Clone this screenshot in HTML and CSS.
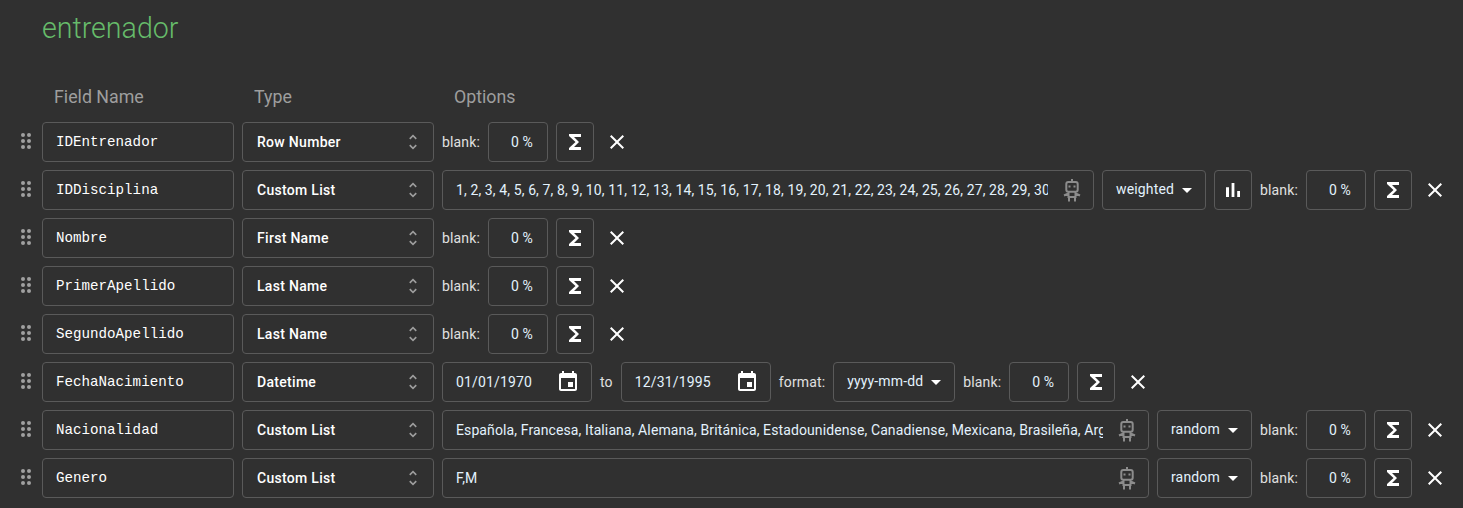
FILE: index.html
```html
<!DOCTYPE html>
<html lang="en">
<head>
  <meta charset="UTF-8">
  <meta name="viewport" content="width=device-width, initial-scale=1.0">
  <title>entrenador</title>
  <link rel="stylesheet" href="styles.css">
</head>
<body>
  <svg class="sprites" width="0" height="0">
    <symbol id="i-drag" viewBox="0 0 12 18"><circle cx="3" cy="3" r="2"/><circle cx="9" cy="3" r="2"/><circle cx="3" cy="9" r="2"/><circle cx="9" cy="9" r="2"/><circle cx="3" cy="15" r="2"/><circle cx="9" cy="15" r="2"/></symbol>
    <symbol id="i-unfold" viewBox="0 0 24 24"><path d="M12 5.83L15.17 9l1.41-1.41L12 3 7.41 7.59 8.83 9 12 5.83zm0 12.34L8.83 15l-1.41 1.41L12 21l4.59-4.59L15.17 15 12 18.17z"/></symbol>
    <symbol id="i-sum" viewBox="0 0 24 24"><path d="M18 4H6v2l6.5 6L6 18v2h12v-3h-7l5-5-5-5h7z"/></symbol>
    <symbol id="i-close" viewBox="0 0 24 24"><path d="M19 6.41L17.59 5 12 10.59 6.41 5 5 6.41 10.59 12 5 17.59 6.41 19 12 13.41 17.59 19 19 17.59 13.41 12z"/></symbol>
    <symbol id="i-bars" viewBox="0 0 24 24"><path d="M5 9.2h3V19H5zM10.6 5h2.8v14h-2.8zm5.6 8H19v6h-2.8z"/></symbol>
    <symbol id="i-event" viewBox="0 0 24 24"><path d="M17 12h-5v5h5v-5zM16 1v2H8V1H6v2H5c-1.11 0-1.99.9-1.99 2L3 19c0 1.1.89 2 2 2h14c1.1 0 2-.9 2-2V5c0-1.1-.9-2-2-2h-1V1h-2zm3 18H5V8h14v11z"/></symbol>
    <symbol id="i-robot" viewBox="0 0 24 24"><path d="M12 1v3M8.300 4h7.400a2 2 0 0 1 2 2v5.700a2 2 0 0 1-2 2H8.300a2 2 0 0 1-2-2V6a2 2 0 0 1 2-2zM9.500 7.500v2M14.500 7.500v2M8.500 13.700V19h7v-5.300M8.500 15.500L4 17.500M15.500 15.500l4.500 2M9 19v4.500M15 19v4.500"/></symbol>
  </svg>

  <h1 class="title">entrenador</h1>

  <div class="head-row">
    <span class="head-name">Field Name</span>
    <span class="head-type">Type</span>
    <span>Options</span>
  </div>

  <div class="row">
    <svg class="drag"><use href="#i-drag"/></svg>
    <input class="box name" value="IDEntrenador">
    <div class="box type">Row Number <svg class="unfold"><use href="#i-unfold"/></svg></div>
    <span class="lbl">blank:</span>
    <input class="box pct" value="0 %">
    <button class="btn"><svg class="ico"><use href="#i-sum"/></svg></button>
    <button class="del"><svg class="ico"><use href="#i-close"/></svg></button>
  </div>

  <div class="row">
    <svg class="drag"><use href="#i-drag"/></svg>
    <input class="box name" value="IDDisciplina">
    <div class="box type">Custom List <svg class="unfold"><use href="#i-unfold"/></svg></div>
    <div class="box list">
      <input value="1, 2, 3, 4, 5, 6, 7, 8, 9, 10, 11, 12, 13, 14, 15, 16, 17, 18, 19, 20, 21, 22, 23, 24, 25, 26, 27, 28, 29, 30, 31, 32, 33, 34, 35">
      <svg class="robot"><use href="#i-robot"/></svg>
    </div>
    <div class="box pick weighted">weighted <i class="caret"></i></div>
    <button class="btn"><svg class="ico"><use href="#i-bars"/></svg></button>
    <span class="lbl">blank:</span>
    <input class="box pct" value="0 %">
    <button class="btn"><svg class="ico"><use href="#i-sum"/></svg></button>
    <button class="del"><svg class="ico"><use href="#i-close"/></svg></button>
  </div>

  <div class="row">
    <svg class="drag"><use href="#i-drag"/></svg>
    <input class="box name" value="Nombre">
    <div class="box type">First Name <svg class="unfold"><use href="#i-unfold"/></svg></div>
    <span class="lbl">blank:</span>
    <input class="box pct" value="0 %">
    <button class="btn"><svg class="ico"><use href="#i-sum"/></svg></button>
    <button class="del"><svg class="ico"><use href="#i-close"/></svg></button>
  </div>

  <div class="row">
    <svg class="drag"><use href="#i-drag"/></svg>
    <input class="box name" value="PrimerApellido">
    <div class="box type">Last Name <svg class="unfold"><use href="#i-unfold"/></svg></div>
    <span class="lbl">blank:</span>
    <input class="box pct" value="0 %">
    <button class="btn"><svg class="ico"><use href="#i-sum"/></svg></button>
    <button class="del"><svg class="ico"><use href="#i-close"/></svg></button>
  </div>

  <div class="row">
    <svg class="drag"><use href="#i-drag"/></svg>
    <input class="box name" value="SegundoApellido">
    <div class="box type">Last Name <svg class="unfold"><use href="#i-unfold"/></svg></div>
    <span class="lbl">blank:</span>
    <input class="box pct" value="0 %">
    <button class="btn"><svg class="ico"><use href="#i-sum"/></svg></button>
    <button class="del"><svg class="ico"><use href="#i-close"/></svg></button>
  </div>

  <div class="row">
    <svg class="drag"><use href="#i-drag"/></svg>
    <input class="box name" value="FechaNacimiento">
    <div class="box type">Datetime <svg class="unfold"><use href="#i-unfold"/></svg></div>
    <div class="box date"><span>01/01/1970</span><svg class="ico"><use href="#i-event"/></svg></div>
    <span class="lbl">to</span>
    <div class="box date"><span>12/31/1995</span><svg class="ico"><use href="#i-event"/></svg></div>
    <span class="lbl">format:</span>
    <div class="box pick format">yyyy-mm-dd <i class="caret"></i></div>
    <span class="lbl">blank:</span>
    <input class="box pct" value="0 %">
    <button class="btn"><svg class="ico"><use href="#i-sum"/></svg></button>
    <button class="del"><svg class="ico"><use href="#i-close"/></svg></button>
  </div>

  <div class="row">
    <svg class="drag"><use href="#i-drag"/></svg>
    <input class="box name" value="Nacionalidad">
    <div class="box type">Custom List <svg class="unfold"><use href="#i-unfold"/></svg></div>
    <div class="box list">
      <input value="Española, Francesa, Italiana, Alemana, Británica, Estadounidense, Canadiense, Mexicana, Brasileña, Argentina, Japonesa">
      <svg class="robot"><use href="#i-robot"/></svg>
    </div>
    <div class="box pick random">random <i class="caret"></i></div>
    <span class="lbl">blank:</span>
    <input class="box pct" value="0 %">
    <button class="btn"><svg class="ico"><use href="#i-sum"/></svg></button>
    <button class="del"><svg class="ico"><use href="#i-close"/></svg></button>
  </div>

  <div class="row">
    <svg class="drag"><use href="#i-drag"/></svg>
    <input class="box name" value="Genero">
    <div class="box type">Custom List <svg class="unfold"><use href="#i-unfold"/></svg></div>
    <div class="box list">
      <input value="F,M">
      <svg class="robot"><use href="#i-robot"/></svg>
    </div>
    <div class="box pick random">random <i class="caret"></i></div>
    <span class="lbl">blank:</span>
    <input class="box pct" value="0 %">
    <button class="btn"><svg class="ico"><use href="#i-sum"/></svg></button>
    <button class="del"><svg class="ico"><use href="#i-close"/></svg></button>
  </div>
</body>
</html>
```

FILE: styles.css
```css
* {
  box-sizing: border-box;
}
body {
  margin: 0;
  padding: 0 13px 0 20px;
  background-color: #303030;
  color: #fff;
  font-family: Roboto, sans-serif;
  font-size: 14px;
  letter-spacing: 0.15px;
  overflow: hidden;
}
.sprites {
  display: block;
}
.title {
  margin: 0 0 0 22px;
  padding-top: 9px;
  height: 87px;
  color: #66bb6a;
  font-size: 28.6px;
  font-weight: 300;
  letter-spacing: 0;
  line-height: 38px;
}
.head-row {
  display: flex;
  height: 35px;
  padding-left: 34px;
  color: #9e9e9e;
  font-size: 17.8px;
  letter-spacing: 0;
  line-height: 20px;
}
.head-name,
.head-type {
  width: 200px;
}
.row {
  display: flex;
  align-items: center;
  gap: 8px;
  height: 40px;
  margin-bottom: 8px;
}
.drag {
  width: 12px;
  height: 18px;
  margin-right: 2px;
  margin-top: -3px;
  flex: none;
  fill: #a0a0a0;
}
.box {
  height: 40px;
  flex: none;
  border: 1px solid #5a5a5a;
  border-radius: 4px;
  background: transparent;
  color: #fff;
  font-family: Roboto, sans-serif;
  font-size: 14px;
  letter-spacing: 0.15px;
  outline: none;
}
input.name {
  width: 192px;
  padding: 0 13px 1px;
  font-family: "Liberation Mono", monospace;
  font-size: 14.2px;
  letter-spacing: 0;
}
.type {
  display: flex;
  align-items: center;
  justify-content: space-between;
  width: 192px;
  padding: 0 10px 0 14px;
  font-weight: 500;
  letter-spacing: 0.3px;
}
.unfold {
  width: 20px;
  height: 20px;
  fill: #9e9e9e;
}
.lbl {
  flex: none;
  color: #e0e0e0;
}
input.pct {
  width: 60px;
  padding: 0 14px 0 0;
  text-align: right;
  color: #e3f2fd;
}
.btn {
  display: flex;
  align-items: center;
  justify-content: center;
  width: 38px;
  height: 40px;
  flex: none;
  padding: 0;
  border: 1px solid #5a5a5a;
  border-radius: 4px;
  background: transparent;
}
.del {
  display: flex;
  align-items: center;
  justify-content: center;
  width: 30px;
  height: 40px;
  flex: none;
  padding: 0;
  border: 0;
  background: transparent;
}
.ico {
  width: 24px;
  height: 24px;
  fill: #fff;
}
.list {
  display: flex;
  align-items: center;
  flex: 1;
  min-width: 0;
  padding: 0 9px 0 13px;
}
.list input {
  flex: 1;
  min-width: 0;
  padding: 0;
  border: 0;
  background: transparent;
  color: #e3f2fd;
  font-family: Roboto, sans-serif;
  font-size: 14px;
  letter-spacing: 0.11px;
  outline: none;
}
.robot {
  width: 24px;
  height: 24px;
  margin-left: 12px;
  fill: none;
  stroke: #8c8c8c;
  stroke-width: 2;
}
.pick {
  display: flex;
  align-items: center;
  justify-content: space-between;
  padding: 0 13px 3px 13px;
  color: #e3f2fd;
}
.weighted {
  width: 104px;
}
.random {
  width: 95px;
}
.format {
  width: 122px;
}
.caret {
  width: 0;
  height: 0;
  margin-top: 3px;
  border-left: 5px solid transparent;
  border-right: 5px solid transparent;
  border-top: 5px solid #fff;
}
.date {
  display: flex;
  align-items: center;
  justify-content: space-between;
  width: 150px;
  padding: 0 11px 0 13px;
  color: #e3f2fd;
}
```
